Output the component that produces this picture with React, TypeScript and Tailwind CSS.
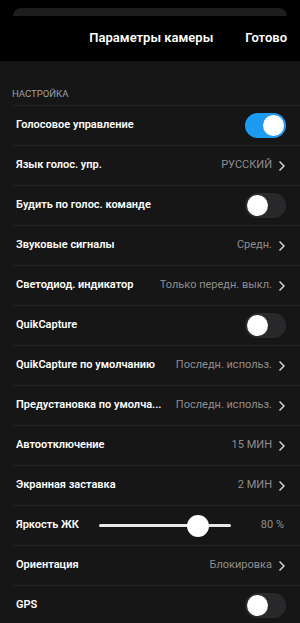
import React from "react";

type Row =
  | { kind: "toggle"; label: string; on: boolean }
  | { kind: "value"; label: string; value: string }
  | { kind: "slider"; label: string; value: string; pct: number };

const rows: Row[] = [
  { kind: "toggle", label: "Голосовое управление", on: true },
  { kind: "value", label: "Язык голос. упр.", value: "РУССКИЙ" },
  { kind: "toggle", label: "Будить по голос. команде", on: false },
  { kind: "value", label: "Звуковые сигналы", value: "Средн." },
  { kind: "value", label: "Светодиод. индикатор", value: "Только передн. выкл." },
  { kind: "toggle", label: "QuikCapture", on: false },
  { kind: "value", label: "QuikCapture по умолчанию", value: "Последн. использ." },
  { kind: "value", label: "Предустановка по умолча...", value: "Последн. использ." },
  { kind: "value", label: "Автоотключение", value: "15 МИН" },
  { kind: "value", label: "Экранная заставка", value: "2 МИН" },
  { kind: "slider", label: "Яркость ЖК", value: "80 %", pct: 75 },
  { kind: "value", label: "Ориентация", value: "Блокировка" },
  { kind: "toggle", label: "GPS", on: false },
];

function Chevron() {
  return (
    <svg width="6" height="10" viewBox="0 0 6 10" className="shrink-0">
      <path d="M1 1 L5 5 L1 9" fill="none" stroke="#d0d0d0" strokeWidth="1.6" strokeLinecap="round" strokeLinejoin="round" />
    </svg>
  );
}

function Toggle({ on }: { on: boolean }) {
  return (
    <div
      className={
        on
          ? "w-[41px] h-[25px] rounded-full bg-[#1d9bf0] flex items-center justify-end px-[2px]"
          : "w-[41px] h-[25px] rounded-full bg-[#29292b] flex items-center justify-start px-[2px]"
      }
    >
      <div className="w-[21px] h-[21px] rounded-full bg-white" />
    </div>
  );
}

export default function App() {
  return (
    <div
      className="w-[300px] h-[623px] overflow-hidden bg-black text-white"
      style={{ fontFamily: "Roboto, 'Open Sans', sans-serif" }}
    >
      <div className="h-[61px] flex flex-col">
        <div className="mx-[13px] mt-[8px] h-[8px] rounded-t-[8px] bg-[#1d1d1d]" />
        <div className="flex-1 flex items-center justify-end pr-[13px] gap-[32px] pb-[1px]">
          <span className="text-[13px] font-semibold">Параметры камеры</span>
          <span className="text-[13px] font-semibold">Готово</span>
        </div>
      </div>
      <div className="bg-[#161616] h-[562px]">
        <div className="h-[44px] flex items-end pl-[12px] pb-[4px]">
          <span className="text-[9.5px] text-[#a0a0a0]">НАСТРОЙКА</span>
        </div>
        {rows.map((r, i) => (
          <div key={i} className="ml-[12px] border-t border-[#232323] h-[40px] flex items-center pl-[4px] pr-[14px]">
            <span className="text-[11px] font-semibold whitespace-nowrap">{r.label}</span>
            <div className="flex-1" />
            {r.kind === "toggle" && <Toggle on={r.on} />}
            {r.kind === "value" && (
              <div className="flex items-center gap-[7px] pr-[1px]">
                <span className="text-[11px] text-[#8e8e8e] whitespace-nowrap">{r.value}</span>
                <Chevron />
              </div>
            )}
            {r.kind === "slider" && (
              <div className="flex-none flex items-center">
                <div className="relative w-[132px] h-[3px] bg-[#e8e8e8] rounded-full mr-[30px]">
                  <div
                    className="absolute top-1/2 -translate-y-1/2 -translate-x-1/2 w-[22px] h-[22px] rounded-full bg-white"
                    style={{ left: `${r.pct}%` }}
                  />
                </div>
                <span className="text-[11px] text-[#8e8e8e] whitespace-nowrap pr-[2px]">{r.value}</span>
              </div>
            )}
          </div>
        ))}
      </div>
    </div>
  );
}
